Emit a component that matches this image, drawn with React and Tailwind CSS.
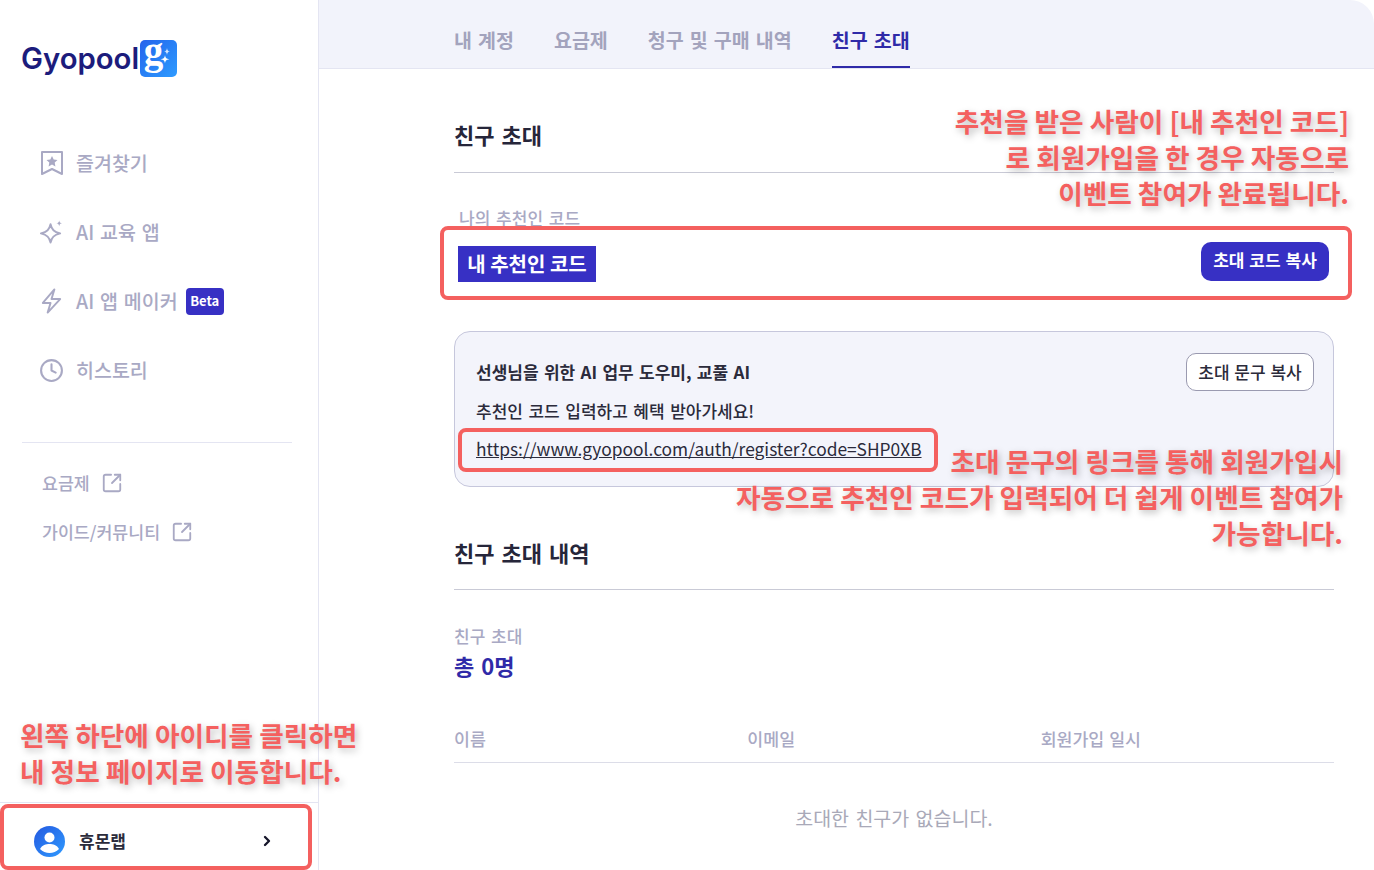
import React from 'react';
import { Clock, SquareArrowOutUpRight, ChevronRight } from 'lucide-react';

const NAV_TEXT = 'text-[19.5px] font-medium text-[#a9a9c4] [word-spacing:1.5px]';
const KR = "font-['Noto_Sans_CJK_KR','Noto_Sans',sans-serif]";
const NOTE = 'text-[#f4605f] font-bold text-[26.7px] leading-[36px] [text-shadow:2px_3px_7px_rgba(0,0,0,0.26)] whitespace-nowrap';

const BookmarkStar = () => (
    <svg width="24" height="26" viewBox="0 0 24 26" fill="none" stroke="#a9a9c4" strokeWidth="2">
        <path d="M2 2h20v22l-10-5-10 5z" strokeLinejoin="round" />
        <path d="M12 6l1.700 3.500 3.800.5-2.800 2.600.7 3.800-3.400-1.800-3.400 1.800.7-3.800L6.500 10l3.800-.5z" fill="#a9a9c4" stroke="none" />
    </svg>
);

const SparkleIcon = () => (
    <svg width="26" height="26" viewBox="0 0 26 26" fill="none" stroke="#a9a9c4" strokeWidth="2" strokeLinejoin="round">
        <path d="M12 5c1.200 5.500 3.500 7.800 10 9.500-6.500 1.700-8.800 4-10 9.500-1.200-5.500-3.500-7.800-10-9.500C8.500 12.800 10.800 10.500 12 5z" />
        <path d="M21 1c.4 2 1 2.600 3 3-2 .4-2.600 1-3 3-.4-2-1-2.600-3-3 2-.4 2.600-1 3-3z" fill="#a9a9c4" stroke="none" />
    </svg>
);

const BoltIcon = () => (
    <svg width="26" height="26" viewBox="0 0 26 26" fill="none" stroke="#a9a9c4" strokeWidth="2" strokeLinejoin="round">
        <path d="M16 1 4 15h8l-3 10 13-14h-9z" />
    </svg>
);

const Logo = () => (
    <div className="flex items-center">
        <span className="font-['Inter',sans-serif] text-[29.3px] font-semibold text-[#1c1c7c] leading-none">Gyopool</span>
        <div className="w-[37px] h-[37px] rounded-[5px] bg-gradient-to-br from-[#2563eb] to-[#2f9bff] relative flex items-center justify-center ml-[1px]">
            <span className="font-['Liberation_Serif',serif] text-[39px] font-bold text-white leading-none -mt-[16px] -ml-[10px]">g</span>
            <svg className="absolute right-[4px] top-[8px]" width="14" height="18" viewBox="0 0 14 18" fill="#fff">
                <path d="M8 0c.3 2.500 1 3.200 3 3.500-2 .3-2.700 1-3 3.500-.3-2.500-1-3.200-3-3.500 2-.3 2.700-1 3-3.500z" opacity="0.8" />
                <path d="M6 7c.4 3 1.200 3.800 4.500 4.300-3.300.5-4.100 1.300-4.500 4.300-.4-3-1.200-3.800-4.500-4.300C4.800 10.800 5.600 10 6 7z" />
            </svg>
        </div>
    </div>
);

const NavItem = ({ icon, label, badge }) => (
    <div className="flex items-center h-[36px] gap-[12px] pl-[39px]">
        <div className="w-[25px] flex justify-center">{icon}</div>
        <span className={NAV_TEXT}>{label}</span>
        {badge && (
            <span className="-ml-[4px] bg-[#3730c4] text-white text-[13px] font-bold rounded-[4px] px-[4px] w-[38px] h-[27px] flex items-center justify-center">{badge}</span>
        )}
    </div>
);

const ExternalLink = ({ label }) => (
    <div className="flex items-center gap-[11px] h-[24px] text-[17.3px] font-medium text-[#a9a9c4]">
        <span>{label}</span>
        <SquareArrowOutUpRight size={22} strokeWidth={2} />
    </div>
);

const Sidebar = () => (
    <aside className="w-[319px] shrink-0 h-full border-r border-[#e4e5f2] flex flex-col bg-white">
        <div className="pt-[40px] pl-[21px]">
            <Logo />
        </div>
        <nav className="mt-[68px] flex flex-col gap-[33px]">
            <NavItem icon={<BookmarkStar />} label="즐겨찾기" />
            <NavItem icon={<SparkleIcon />} label="AI 교육 앱" />
            <NavItem icon={<BoltIcon />} label="AI 앱 메이커" badge="Beta" />
            <NavItem icon={<Clock size={25} strokeWidth={2} color="#a9a9c4" />} label="히스토리" />
        </nav>
        <div className="ml-[22px] mt-[54px] mb-[28px] border-t border-[#e4e5f2] w-[270px]" />
        <div className="pl-[42px] flex flex-col gap-[25px]">
            <ExternalLink label="요금제" />
            <ExternalLink label="가이드/커뮤니티" />
        </div>
        <div className="mt-auto h-[68px] border-t border-[#e4e5f2] flex items-center pt-[9px] pl-[34px] pr-[43px] gap-[14px]">
            <svg width="31" height="31" viewBox="0 0 31 31">
                <defs>
                    <linearGradient id="avatar" x1="0" y1="0" x2="1" y2="1">
                        <stop offset="0" stopColor="#2458e0" />
                        <stop offset="1" stopColor="#2f9bff" />
                    </linearGradient>
                </defs>
                <circle cx="15.500" cy="15.500" r="15.500" fill="url(#avatar)" />
                <circle cx="15.500" cy="11.500" r="5" fill="#fff" />
                <path d="M6 23c2-4 6-5 9.500-5s7.500 1 9.500 5c-2.500 2.500-6 4-9.500 4S8.500 25.500 6 23z" fill="#fff" />
            </svg>
            <span className="text-[17px] font-bold text-[#2b2b3b]">휴몬랩</span>
            <ChevronRight size={16} strokeWidth={3.500} className="ml-auto text-[#15152a]" />
        </div>
    </aside>
);

const TABS = [
    { label: '내 계정' },
    { label: '요금제' },
    { label: '청구 및 구매 내역' },
    { label: '친구 초대', active: true },
];

const Main = () => (
    <main className="flex-1 h-full flex flex-col min-w-0">
        <header className="h-[69px] shrink-0 bg-[#f2f3fb] border-b border-[#e4e5f2] rounded-tr-[24px] flex items-end pl-[135px] gap-[40px]">
            {TABS.map(tab => (
                <div
                    key={tab.label}
                    className={`h-[48px] pt-[5px] text-[19.5px] font-bold border-b-2 [word-spacing:1.7px] ${
                        tab.active ? 'text-[#2f2aa8] border-[#2f2aa8]' : 'text-[#a3a3bd] border-transparent'
                    }`}
                >
                    {tab.label}
                </div>
            ))}
        </header>

        <div className="pl-[135px] pr-[40px] flex flex-col">
            <h2 className="mt-[49px] text-[22px] leading-[32px] font-bold text-[#26263a] [word-spacing:2px]">친구 초대</h2>
            <div className="mt-[22px] border-t border-[#c9cad6]" />

            <div className="mt-[33px] pl-[5px] text-[17px] leading-[24px] font-medium text-[#a9a9c4] [word-spacing:2px]">나의 추천인 코드</div>

            <div className="mt-[14px] pl-[4px] pr-[5px] flex items-center justify-between h-[40px]">
                <div className="w-[138px] h-[36px] bg-[#3730c4] text-white text-[20px] font-bold flex items-center justify-center">내 추천인 코드</div>
                <button className="w-[128px] h-[39px] rounded-[10px] bg-[#3730c4] text-white text-[17px] font-bold -mt-[6px] pb-[2px] [word-spacing:1px]">초대 코드 복사</button>
            </div>

            <div className="mt-[47px] h-[156px] rounded-[16px] border border-[#c6c7dc] bg-[#f3f4fb] pl-[21px] pr-[19px] pt-[21px] relative">
                <div className="flex items-start justify-between">
                    <span className="text-[17px] leading-[38px] font-bold text-[#2b2b3b] [word-spacing:1.5px]">선생님을 위한 AI 업무 도우미, 교풀 AI</span>
                    <button className="w-[128px] h-[38px] rounded-[10px] border border-[#9a9ab0] bg-white text-[17px] font-medium text-[#2b2b3b] [word-spacing:1px]">초대 문구 복사</button>
                </div>
                <div className="mt-[1px] text-[17px] leading-[38px] font-medium text-[#2b2b3b] [word-spacing:1.7px]">추천인 코드 입력하고 혜택 받아가세요!</div>
                <div className="text-[17.35px] leading-[38px] text-[#2b2b3b] underline">https://www.gyopool.com/auth/register?code=SHP0XB</div>
            </div>

            <h2 className="mt-[49px] text-[22px] leading-[32px] font-bold text-[#26263a] [word-spacing:2px]">친구 초대 내역</h2>
            <div className="mt-[21px] border-t border-[#c9cad6]" />

            <div className="mt-[34px] text-[17px] leading-[24px] font-medium text-[#a9a9c4] [word-spacing:2px]">친구 초대</div>
            <div className="mt-[1px] text-[22px] leading-[32px] font-bold text-[#2f2aa8] [word-spacing:2px]">총 0명</div>

            <div className="mt-[46px] grid grid-cols-3 text-[17.3px] leading-[24px] font-medium text-[#a9a9c4] pb-[11px] border-b border-[#dcdde8]">
                <span>이름</span>
                <span>이메일</span>
                <span className="[word-spacing:1px]">회원가입 일시</span>
            </div>
            <div className="mt-[41px] text-center text-[19.5px] leading-[28px] text-[#a9a9b8] [word-spacing:2px]">초대한 친구가 없습니다.</div>
        </div>
    </main>
);

const App = () => (
    <div className={`relative w-[1374px] h-[870px] overflow-hidden bg-white flex ${KR}`}>
        <Sidebar />
        <Main />

        {/* annotation boxes and captions over the page */}
        <div className="absolute left-[440px] top-[226px] w-[912px] h-[74px] rounded-[8px] border-[4px] border-[#f4605f]" />
        <div className="absolute left-[458px] top-[428px] w-[480px] h-[44px] rounded-[8px] border-[4px] border-[#f4605f]" />
        <div className="absolute left-0 top-[804px] w-[312px] h-[66px] rounded-[8px] border-[4px] border-[#f4605f]" />

        <div className={`absolute right-[25px] top-[103px] text-right ${NOTE}`}>
            추천을 받은 사람이 [내 추천인 코드]<br />로 회원가입을 한 경우 자동으로<br />이벤트 참여가 완료됩니다.
        </div>
        <div className={`absolute right-[31px] top-[443px] text-right ${NOTE}`}>
            초대 문구의 링크를 통해 회원가입시<br />자동으로 추천인 코드가 입력되어 더 쉽게 이벤트 참여가<br />가능합니다.
        </div>
        <div className={`absolute left-[20px] top-[717px] ${NOTE}`}>
            왼쪽 하단에 아이디를 클릭하면<br />내 정보 페이지로 이동합니다.
        </div>
    </div>
);

export default App;
